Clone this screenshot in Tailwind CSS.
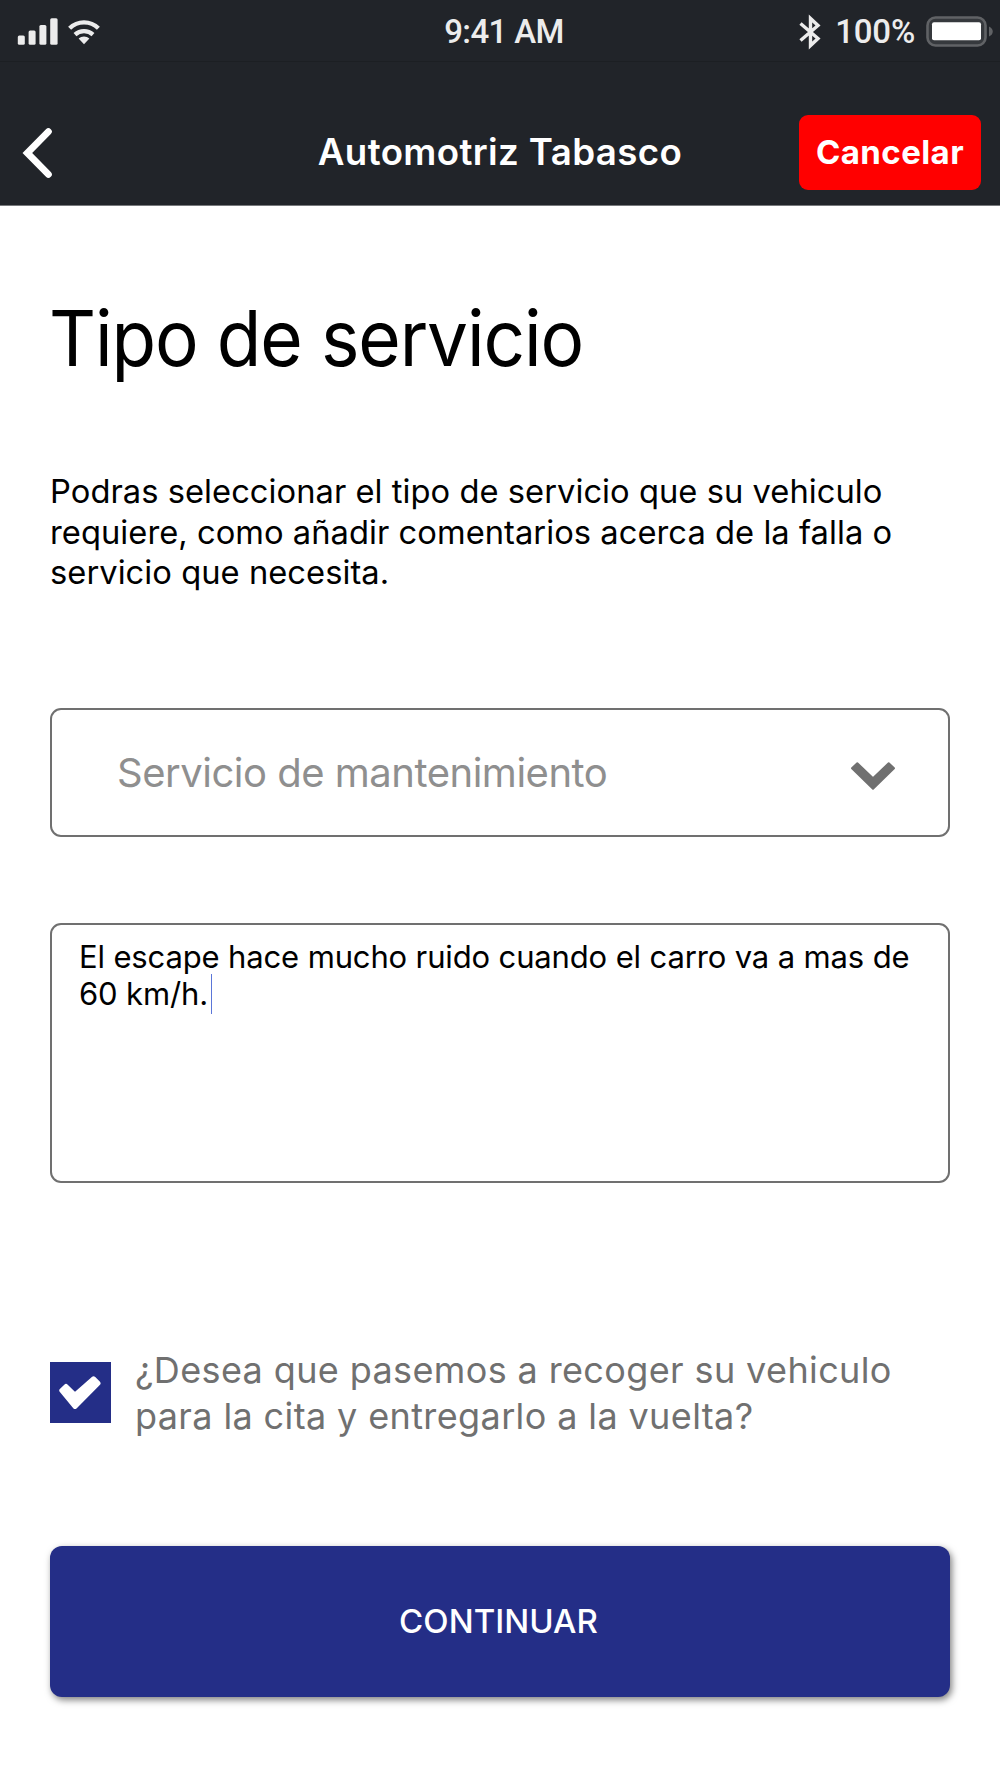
<!DOCTYPE html>
<html lang="es">
  <head>
    <meta charset="UTF-8" />
    <meta name="viewport" content="width=device-width, initial-scale=1.0" />
    <title>Automotriz Tabasco - Tipo de servicio</title>
    <script src="https://cdn.jsdelivr.net/npm/@tailwindcss/browser@4"></script>
  </head>

  <body class="w-[1000px] h-[1778px] overflow-hidden bg-white text-black font-[Inter,sans-serif]">
    <!-- Status bar -->
    <div class="grid grid-cols-3 items-center h-[62px] pt-0.5 bg-[#212429] border-b border-[#1c1f23] text-[#ececec] font-[Roboto,sans-serif] text-[33px] leading-none font-medium">
      <div class="flex items-center gap-2.5 pl-[17px]">
        <svg class="w-[41px] h-[27px]" viewBox="0 0 41 27" fill="currentColor">
          <rect x="0.8" y="17.5" width="7" height="9.2" rx="1.5" />
          <rect x="11.6" y="12.5" width="7" height="14.2" rx="1.5" />
          <rect x="22.4" y="7" width="7" height="19.7" rx="1.5" />
          <rect x="33.2" y="0.3" width="7.4" height="26.4" rx="1.5" />
        </svg>
        <svg class="w-8 h-[26px]" viewBox="0 0 32 26" fill="none" stroke="currentColor" stroke-width="4.2">
          <path d="M1.6 9.3C9.6 1.4 22.4 1.4 30.4 9.3" />
          <path d="M7 15.6C12 10.9 20 10.9 25 15.6" />
          <path d="M16 25.3L10.6 19.6C13.6 16.9 18.4 16.9 21.4 19.6Z" fill="currentColor" stroke="none" />
        </svg>
      </div>
      <span class="text-center tracking-[-0.6px] pl-2">9:41 AM</span>
      <div class="flex items-center justify-end pr-1.5">
        <svg class="w-[22px] h-9 mr-3.5" viewBox="0 0 22 36" fill="none" stroke="currentColor" stroke-width="3.4">
          <path d="M1.5 9.500L19 24.500L11.500 31.500V4.500L19 11.500L1.500 26.500" />
        </svg>
        <span class="tracking-[-0.2px]">100%</span>
        <svg class="w-[68px] h-[31px] ml-[11px]" viewBox="0 0 68 31">
          <rect x="1.5" y="1.5" width="58" height="28" rx="8" fill="#36393d" stroke="#606265" stroke-width="2.6" />
          <rect x="6" y="6.3" width="49" height="18" rx="2" fill="#fff" />
          <path d="M63 10.5C68 12.5 68 18.500 63 20.500Z" fill="#606265" />
        </svg>
      </div>
    </div>

    <!-- Header -->
    <header class="grid grid-cols-[300px_1fr_300px] items-center h-[144px] pt-[39px] pb-px bg-[#212429] border-b border-[#77797c] text-white">
      <button class="pl-[21px] justify-self-start" aria-label="Regresar">
        <svg class="w-8 h-[52px]" viewBox="0 0 32 52" fill="none" stroke="currentColor" stroke-width="6.8" stroke-linecap="round">
          <path d="M27.400 4.600L6.300 26L27.400 47.400" />
        </svg>
      </button>
      <h1 class="text-center text-[36.7px] leading-none font-semibold tracking-[0.37px] whitespace-nowrap">Automotriz Tabasco</h1>
      <div class="flex justify-end pr-[19px]">
        <button class="w-[182px] h-[75px] rounded-[9px] bg-[#ff0000] text-[33px] leading-none font-bold tracking-[0.43px]">Cancelar</button>
      </div>
    </header>

    <main class="px-[50px] pt-[92px]">
      <h2 class="-ml-px text-[77.5px] leading-[80px] tracking-[-1.2px] whitespace-nowrap origin-left scale-x-[0.94]">Tipo de servicio</h2>

      <p class="mt-[93px] text-[32.7px] leading-[40.7px] tracking-[0.04px]">
        Podras seleccionar el tipo de servicio que su vehiculo<br />
        requiere, como añadir comentarios acerca de la falla o<br />
        servicio que necesita.
      </p>

      <button class="flex items-center justify-between w-full h-[129px] mt-[115px] pl-[65px] pr-[53px] border-2 border-[#707070] rounded-[11px]">
        <span class="text-[40px] leading-none tracking-[-0.49px] text-[#8f8f8f]">Servicio de mantenimiento</span>
        <svg class="w-11 h-7 mt-1.5" viewBox="0 0 44 28" fill="#707070" stroke="#707070" stroke-width="2" stroke-linejoin="round">
          <path d="M6.300 1.200L22 16.200L37.700 1.200L43 6.300L22 26.800L1 6.300Z" />
        </svg>
      </button>

      <div class="w-full h-[260px] mt-[86px] px-[27px] pt-[13px] border-2 border-[#707070] rounded-[11px] text-[31px] leading-[37px] tracking-[-0.14px] whitespace-nowrap">
        <p>El escape hace mucho ruido cuando el carro va a mas de</p>
        <p class="flex items-center">60 km/h.<span class="w-px h-10 -my-1 ml-[3px] bg-[#5b76d8]"></span></p>
      </div>

      <label class="flex items-center gap-6 mt-[164px] text-[36px] leading-[46px] tracking-[0.38px] text-[#707070] whitespace-nowrap">
        <span class="flex items-center justify-center w-[61px] h-[61px] -mt-0.5 bg-[#242e87]">
          <svg class="w-11 h-[34px] mt-0.5 -ml-px" viewBox="0 0 44 34" fill="#fff" stroke="#fff" stroke-width="5" stroke-linejoin="round">
            <path d="M3.800 14.500L8 10.500L17 19.200L35.500 2.800L40 7.300L17 30.400Z" />
          </svg>
        </span>
        <span>
          ¿Desea que pasemos a recoger su vehiculo<br />
          para la cita y entregarlo a la vuelta?
        </span>
      </label>

      <button class="w-full h-[151px] mt-[107px] pr-[3px] rounded-xl bg-[#242e87] text-white text-[33px] leading-none font-medium tracking-[0.03px] shadow-[2px_3px_7px_rgba(0,0,0,0.5)]">CONTINUAR</button>
    </main>
  </body>
</html>
